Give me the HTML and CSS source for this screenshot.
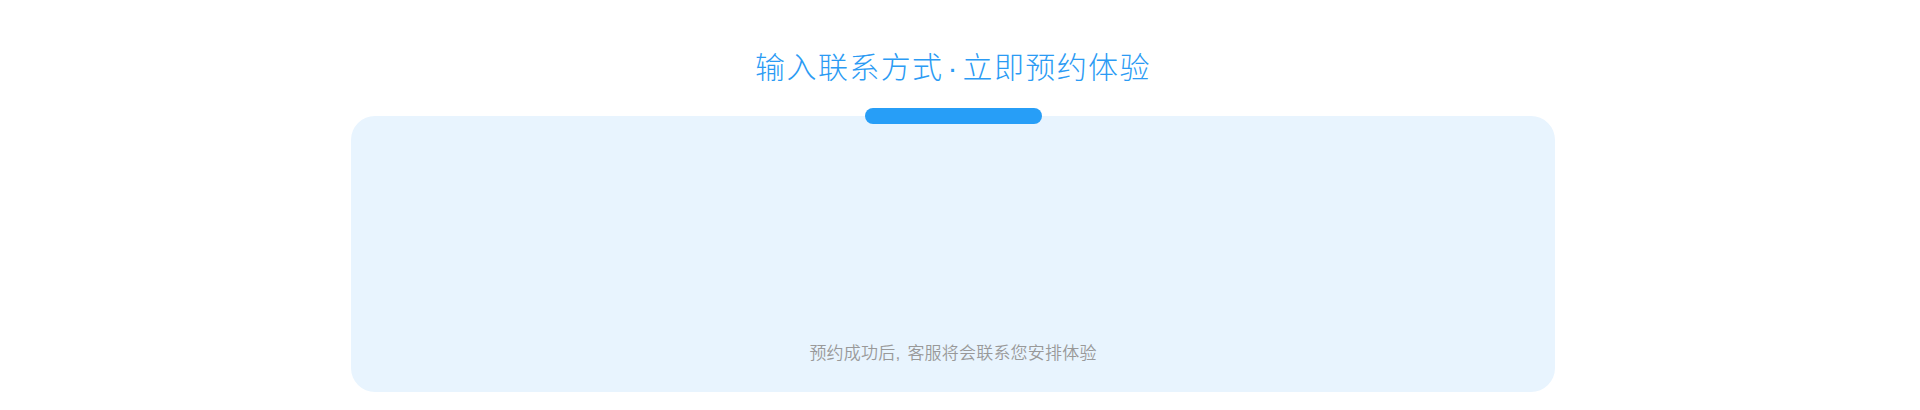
FILE: index.html
```html
<!DOCTYPE html>
<html lang="zh-CN">
<head>
<meta charset="utf-8">
<title>预约体验</title>
<link rel="stylesheet" href="styles.css">
</head>
<body>
<section class="booking">
  <h2 class="booking-title">输入联系方式<span class="booking-dot">·</span>立即预约体验</h2>
  <div class="booking-card">
    <span class="booking-bar"></span>
    <p class="booking-note">预约成功后<span class="booking-comma">,</span>客服将会联系您安排体验</p>
  </div>
</section>
</body>
</html>
```
FILE: styles.css
```css
html, body {
  margin: 0;
  padding: 0;
  background: #ffffff;
}
body {
  font-family: "Noto Sans CJK SC", "Noto Sans", sans-serif;
}
.booking {
  width: 1204px;
  margin-left: 351px;
  padding-top: 45px;
}
.booking-title {
  margin: 0;
  height: 40px;
  line-height: 40px;
  font-size: 30px;
  font-weight: 300;
  letter-spacing: 1.4px;
  color: #2b9bf4;
  text-align: center;
}
.booking-dot {
  display: inline-block;
  width: 18px;
  text-align: center;
  font-family: "Liberation Sans", sans-serif;
  letter-spacing: 0;
  margin-right: 1px;
}
.booking-card {
  position: relative;
  margin-top: 31px;
  height: 276px;
  box-sizing: border-box;
  border-radius: 24px;
  background: #e8f4fe;
  display: flex;
  flex-direction: column;
  justify-content: flex-end;
  align-items: center;
  padding-bottom: 28px;
}
.booking-bar {
  position: absolute;
  top: -8px;
  left: 50%;
  width: 177px;
  height: 16px;
  margin-left: -88px;
  border-radius: 8px;
  background: #279ef7;
}
.booking-note {
  margin: 0;
  height: 24px;
  line-height: 24px;
  font-size: 17px;
  font-weight: 350;
  letter-spacing: 0.2px;
  color: #999999;
}
.booking-comma {
  display: inline-block;
  width: 11px;
  font-family: "Liberation Sans", sans-serif;
  letter-spacing: 0;
  margin-right: 1px;
}
```
